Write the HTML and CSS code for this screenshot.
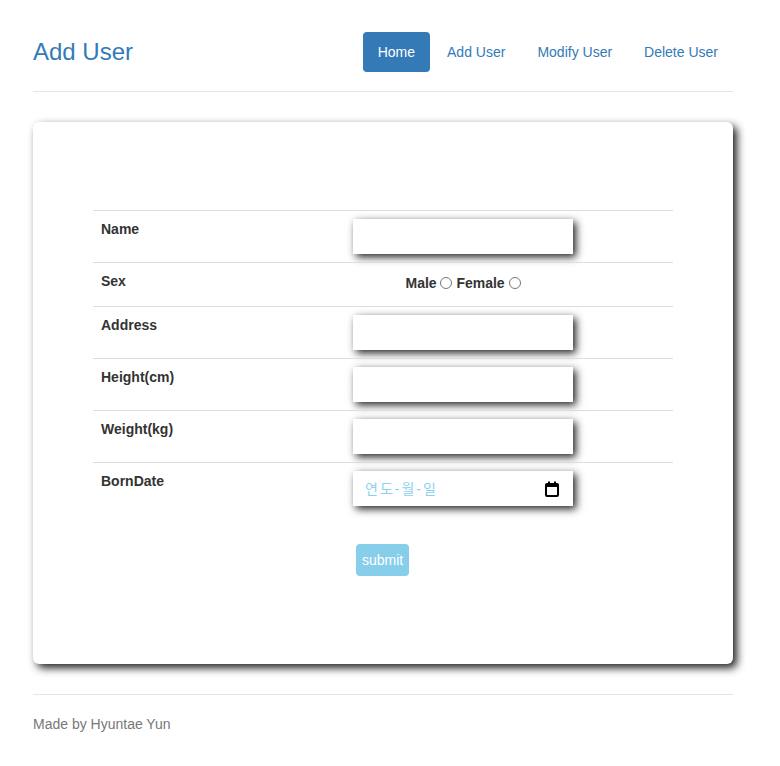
FILE: index.html
```html
<!DOCTYPE html>
<html lang="ko">
<head>
  <meta charset="UTF-8">
  <title>Add User</title>
  <link rel="stylesheet" href="styles.css">
</head>
<body>
  <div class="container">
    <div class="header">
      <h3 class="title">Add User</h3>
      <ul class="nav">
        <li><a href="#" class="active">Home</a></li>
        <li><a href="#">Add User</a></li>
        <li><a href="#">Modify User</a></li>
        <li><a href="#">Delete User</a></li>
      </ul>
    </div>

    <div class="card">
      <form>
        <table class="form-table">
          <tr>
            <td class="label">Name</td>
            <td><input type="text" class="field" name="name"></td>
          </tr>
          <tr>
            <td class="label">Sex</td>
            <td class="sex">
              <label>Male <input type="radio" name="sex" value="m"></label>
              <label>Female <input type="radio" name="sex" value="f"></label>
            </td>
          </tr>
          <tr>
            <td class="label">Address</td>
            <td><input type="text" class="field" name="address"></td>
          </tr>
          <tr>
            <td class="label">Height(cm)</td>
            <td><input type="text" class="field" name="height"></td>
          </tr>
          <tr>
            <td class="label">Weight(kg)</td>
            <td><input type="text" class="field" name="weight"></td>
          </tr>
          <tr>
            <td class="label">BornDate</td>
            <td>
              <div class="date-wrap">
                <input type="text" class="field date" name="born" placeholder="연도-월-일">
                <svg class="cal" width="14" height="16" viewBox="0 0 14 16">
                  <rect x="1" y="3" width="12" height="12" rx="1" fill="none" stroke="#000" stroke-width="2"/>
                  <rect x="1" y="3" width="12" height="3" fill="#000"/>
                  <rect x="3" y="0.5" width="2" height="3" fill="#000"/>
                  <rect x="9" y="0.5" width="2" height="3" fill="#000"/>
                </svg>
              </div>
            </td>
          </tr>
        </table>
        <div class="actions">
          <button type="submit" class="btn-submit">submit</button>
        </div>
      </form>
    </div>

    <div class="footer">
      <p>Made by Hyuntae Yun</p>
    </div>
  </div>
</body>
</html>
```

FILE: styles.css
```css
body { margin: 0; font-family: "Liberation Sans", Arial, sans-serif; font-size: 14px; line-height: 20px; color: #333; background: #fff; }
.container { width: 700px; margin: 0 33px; }

.header { display: flex; justify-content: space-between; align-items: center; padding: 32px 0 19px; border-bottom: 1px solid #e5e5e5; }
.title { margin: 0; font-size: 24px; font-weight: normal; line-height: 40px; color: #337ab7; }
.nav { display: flex; list-style: none; margin: 0; padding: 0; }
.nav li { margin-left: 2px; }
.nav a { display: block; padding: 10px 15px; border-radius: 4px; color: #337ab7; text-decoration: none; }
.nav a.active { background: #337ab7; color: #fff; }

.card { margin-top: 30px; padding: 88px 60px; background: #fff; border-radius: 6px; box-shadow: 4px 4px 9px #222; }

.form-table { width: 100%; border-collapse: collapse; }
.form-table td { padding: 8px; border-top: 1px solid #ddd; vertical-align: top; text-align: center; }
.form-table td.label { width: 144px; text-align: left; font-weight: bold; }
.form-table td.sex { padding: 10px 8px 13px; font-weight: bold; }
.sex input { margin: 3px 0 0 0; width: 12px; height: 12px; vertical-align: -1px; }

.field { display: block; box-sizing: border-box; width: 220px; height: 35px; margin: 0 auto; padding: 6px 12px; border: none; font: inherit; box-shadow: 3px 3px 8px #222; outline: none; }
.date-wrap { position: relative; width: 220px; margin: 0 auto; }
.date { font-family: "Liberation Sans", "Noto Sans CJK KR", sans-serif; letter-spacing: 2px; }
.date::placeholder { color: #8ed1ef; }
.cal { position: absolute; right: 14px; top: 10px; }

.actions { padding: 30px 0 0 263px; }
.btn-submit { padding: 6px 6px; border: none; border-radius: 4px; background: #87ceeb; color: #fff; font: inherit; cursor: pointer; }

.footer { margin-top: 30px; padding-top: 19px; border-top: 1px solid #e5e5e5; color: #777; }
.footer p { margin: 0 0 20px; }
```
